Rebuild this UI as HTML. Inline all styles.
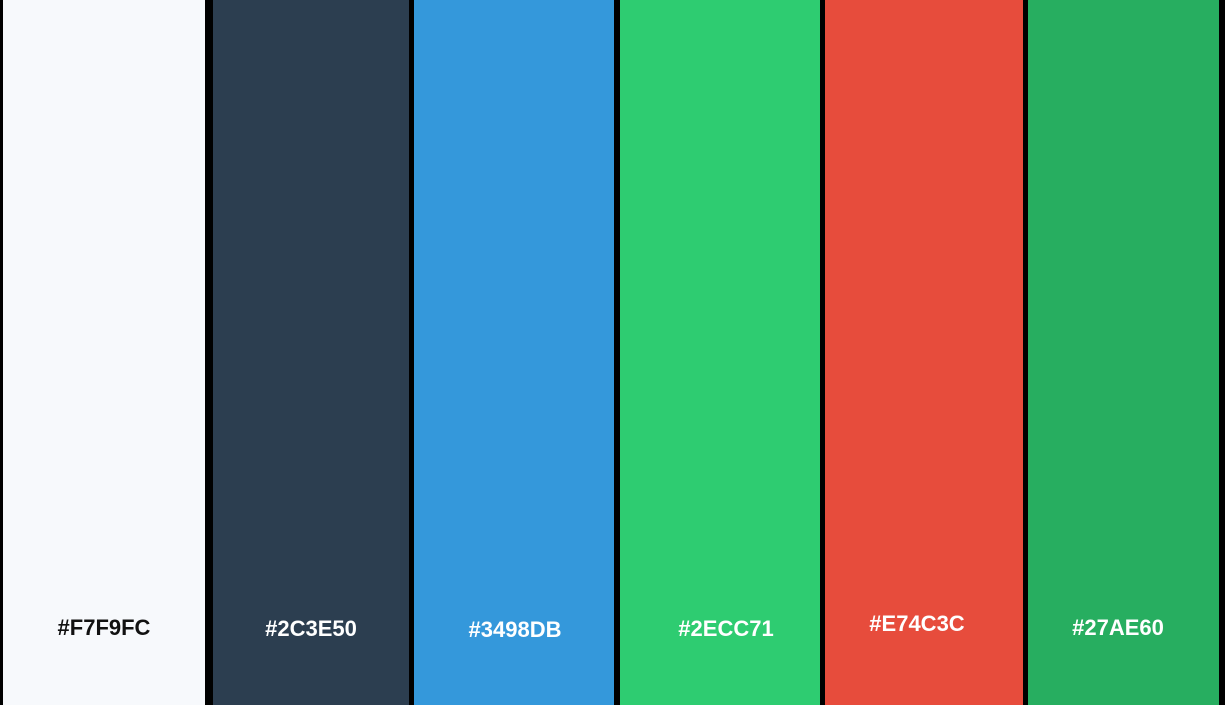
<!DOCTYPE html>
<html><head><meta charset="utf-8"><style>
html,body{margin:0;padding:0;background:#000;width:1225px;height:705px;overflow:hidden;position:relative}
.c{position:absolute;top:0;height:705px;font-family:"Liberation Sans",sans-serif;font-weight:bold;font-size:22px;color:#fff;text-align:center}
.c span{position:absolute;width:200px;line-height:24px;}
</style></head><body>
<div class="c" style="left:3px;width:202px;background:#F7F9FC;color:#111"><span style="left:1px;top:616px">#F7F9FC</span></div>
<div class="c" style="left:213px;width:196px;background:#2C3E50"><span style="left:-2px;top:617px">#2C3E50</span></div>
<div class="c" style="left:414px;width:200px;background:#3498DB"><span style="left:1px;top:618px">#3498DB</span></div>
<div class="c" style="left:620px;width:200px;background:#2ECC71"><span style="left:6px;top:617px">#2ECC71</span></div>
<div class="c" style="left:825px;width:198px;background:#E74C3C"><span style="left:-8px;top:612px">#E74C3C</span></div>
<div class="c" style="left:1028px;width:191px;background:#27AE60"><span style="left:-10px;top:616px">#27AE60</span></div>
</body></html>
